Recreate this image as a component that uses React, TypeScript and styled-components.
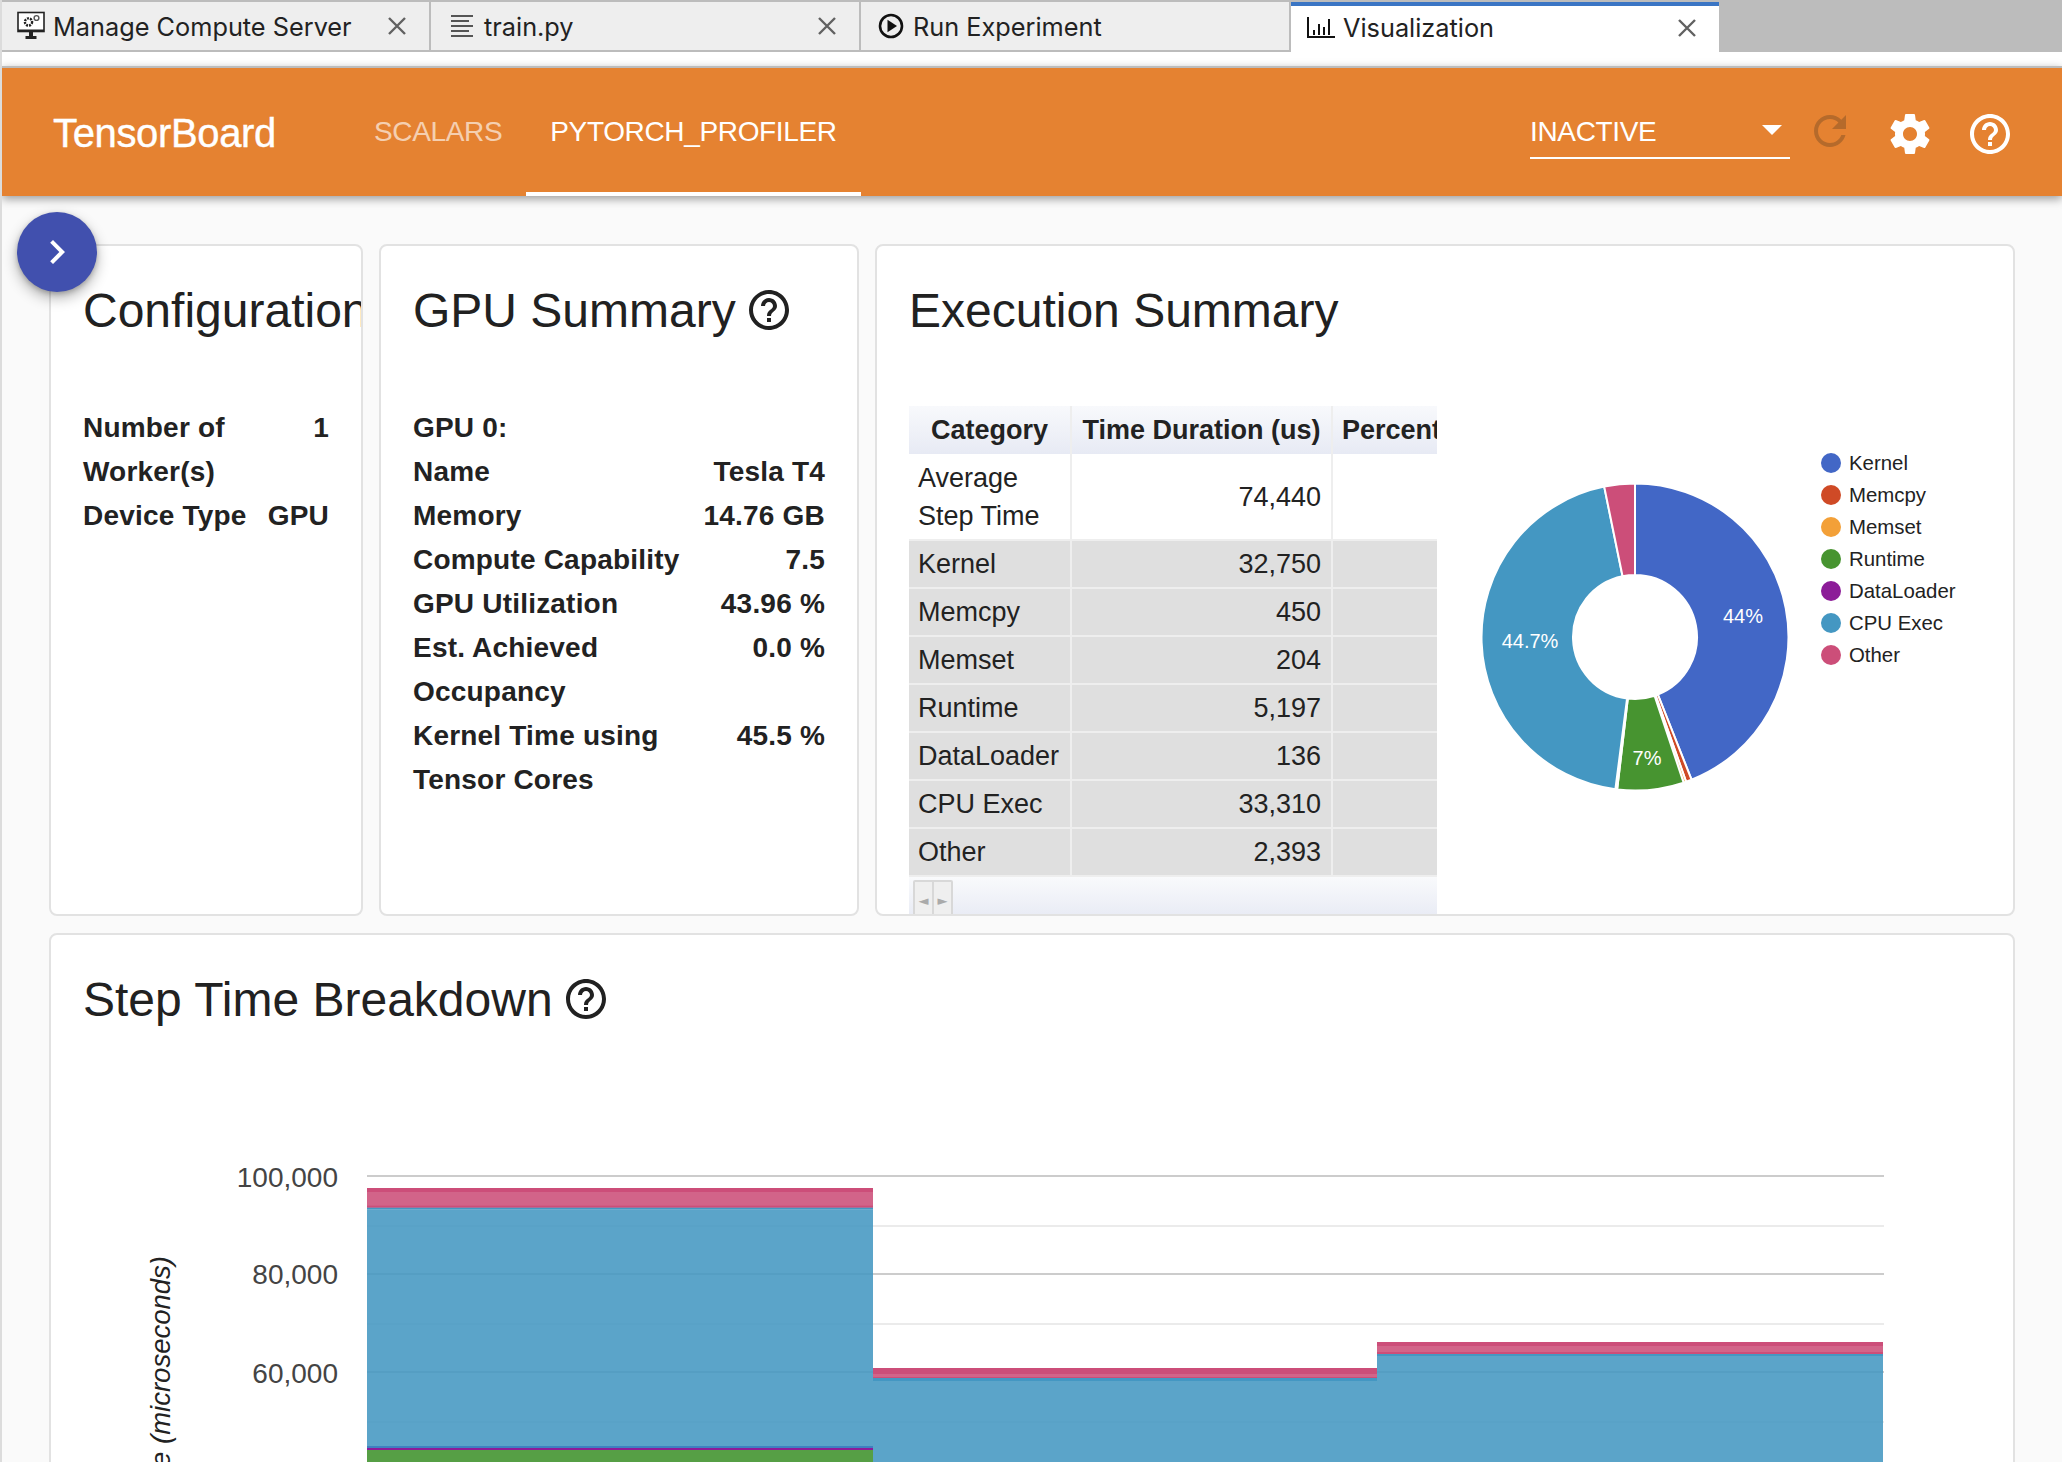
import React from "react";
import styled, { createGlobalStyle } from "styled-components";

const Global = createGlobalStyle`
  html, body { margin: 0; padding: 0; background: #fafafa; }
  * { box-sizing: border-box; }
`;

const Page = styled.div`
  position: relative;
  width: 2062px;
  height: 1462px;
  overflow: hidden;
  display: flex;
  flex-direction: column;
  background: #fafafa;
  border-left: 2px solid #dcdcdc;
  font-family: "Liberation Sans", Arial, sans-serif;
  color: #212121;
`;

/* ---------- editor tabs ---------- */
const TabBar = styled.div`
  display: flex;
  height: 52px;
  margin-left: -2px;
  background: #bcbcbc;
  padding-top: 2px;
`;
const Tab = styled.div<{ $w: number; $active?: boolean }>`
  width: ${(p) => p.$w}px;
  display: flex;
  align-items: center;
  padding-left: ${(p) => (p.$active ? 15 : 16)}px;
  padding-bottom: ${(p) => (p.$active ? 3 : 0)}px;
  background: ${(p) => (p.$active ? "#fff" : "#eeeeee")};
  border-right: ${(p) => (p.$active ? "0" : "2px solid #bcbcbc")};
  border-bottom: ${(p) => (p.$active ? "0" : "2px solid #bcbcbc")};
  border-top: ${(p) => (p.$active ? "4px solid #3a75c4" : "0")};
  font-family: Inter, Roboto, sans-serif;
  font-size: 25.3px;
  color: #222;
`;
const TabIcon = styled.svg`
  flex: none;
  margin-right: 7px;
`;
const TabLabel = styled.span`
  flex: 1;
  white-space: nowrap;
`;
const Close = styled.svg`
  flex: none;
  margin-right: 22px;
`;
const TabGap = styled.div`
  height: 14px;
  background: #fff;
`;

/* ---------- TensorBoard header ---------- */
const Header = styled.header`
  position: relative;
  z-index: 2;
  display: flex;
  align-items: center;
  height: 130px;
  padding-right: 32px;
  background: #e58231;
  border-top: 2px solid #bcbcbc;
  box-shadow: 0 3px 9px rgba(0, 0, 0, 0.38);
  color: #fff;
`;
const Logo = styled.div`
  width: 348px;
  padding-left: 51px;
  padding-top: 2px;
  font-size: 40px;
  letter-spacing: -0.35px;
  -webkit-text-stroke: 0.4px #fff;
  white-space: nowrap;
`;
const NavTab = styled.div<{ $active?: boolean }>`
  align-self: stretch;
  display: flex;
  align-items: center;
  padding: 0 24px 0;
  font-size: 28px;
  letter-spacing: -0.35px;
  opacity: ${(p) => (p.$active ? 1 : 0.62)};
  border-bottom: 4px solid ${(p) => (p.$active ? "#fff" : "transparent")};
  border-top: 4px solid transparent;
  white-space: nowrap;
`;
const Spacer = styled.div`
  flex: 1;
`;
const RunSelect = styled.div`
  width: 260px;
  height: 52px;
  display: flex;
  align-items: center;
  justify-content: space-between;
  padding-right: 8px;
  margin-top: 2px;
  border-bottom: 2px solid #fff;
  font-size: 28px;
  letter-spacing: -0.35px;
`;
const Caret = styled.span`
  width: 0;
  height: 0;
  margin-bottom: 4px;
  border-left: 10px solid transparent;
  border-right: 10px solid transparent;
  border-top: 10px solid #fff;
`;
const IconButton = styled.div<{ $lift?: boolean }>`
  width: 80px;
  height: 80px;
  display: flex;
  align-items: center;
  justify-content: center;
  margin-top: ${(p) => (p.$lift ? -2 : 4)}px;
`;

const Fab = styled.div`
  position: absolute;
  left: 15px;
  top: 212px;
  z-index: 3;
  width: 80px;
  height: 80px;
  border-radius: 50%;
  background: #4150ae;
  display: flex;
  align-items: center;
  justify-content: center;
  box-shadow: 0 6px 14px rgba(0, 0, 0, 0.3), 0 2px 5px rgba(0, 0, 0, 0.2);
`;

/* ---------- page content ---------- */
const Main = styled.main`
  flex: 1;
  min-height: 0;
  display: flex;
  flex-direction: column;
  gap: 17px;
  padding: 48px 47px 0 47px;
`;
const TopRow = styled.div`
  display: grid;
  grid-template-columns: 314px 480px 1fr;
  gap: 16px;
  height: 672px;
  flex: none;
`;
const Card = styled.section`
  min-width: 0;
  overflow: hidden;
  background: #fff;
  border: 2px solid #e2e2e2;
  border-radius: 8px;
  padding: 32px 32px 0;
`;
const WideCard = styled(Card)`
  flex: none;
  height: 700px;
`;
const Title = styled.h2`
  display: flex;
  align-items: center;
  margin: 0;
  height: 64px;
  font-size: 48px;
  font-weight: 400;
  white-space: nowrap;
  color: #212121;
  svg {
    margin-left: -4px;
  }
`;
const Stats = styled.div`
  display: grid;
  grid-template-columns: minmax(0, 1fr) auto;
  margin-top: 64px;
  font-size: 28px;
  font-weight: 700;
  letter-spacing: 0.2px;
  line-height: 44px;
  color: #222;
`;
const StatsSpan = styled.div`
  grid-column: 1 / -1;
`;
const StatValue = styled.div`
  text-align: right;
  white-space: nowrap;
`;
const ConfigStats = styled(Stats)`
  column-gap: 16px;
`;

/* ---------- execution summary ---------- */
const ExecBody = styled.div`
  display: flex;
  margin-top: 64px;
  margin-right: -32px;
  height: 513px;
`;
const TableClip = styled.div`
  flex: none;
  width: 528px;
  overflow: hidden;
  display: flex;
  flex-direction: column;
`;
const DataTable = styled.table`
  table-layout: fixed;
  width: 620px;
  border-collapse: collapse;
  font-size: 27px;
  color: #222;
`;
const Th = styled.th<{ $w: number; $pad?: boolean }>`
  width: ${(p) => p.$w}px;
  height: 48px;
  padding: 0 0 0 ${(p) => (p.$pad ? 9 : 0)}px;
  text-align: center;
  white-space: nowrap;
  overflow: hidden;
  font-weight: 700;
  font-size: 27px;
  background: linear-gradient(#f8f9fc, #e7eaf4);
  border-right: 2px solid #eee;
`;
const Tr = styled.tr<{ $shade?: boolean }>`
  background: ${(p) => (p.$shade ? "#dfdfdf" : "#fff")};
`;
const Td = styled.td<{ $num?: boolean; $tall?: boolean }>`
  height: ${(p) => (p.$tall ? 86 : 48)}px;
  padding: 0 ${(p) => (p.$num ? 10 : 0)}px 0 ${(p) => (p.$num ? 0 : 9)}px;
  text-align: ${(p) => (p.$num ? "right" : "left")};
  line-height: 38px;
  border: 2px solid #eee;
  border-left: 0;
  border-top: 0;
`;
const Pager = styled.div`
  flex: 1;
  padding: 3px 0 0 4px;
  background: linear-gradient(#f9fafc, #e7eaf4);
`;
const PagerButtons = styled.div`
  width: 40px;
  height: 40px;
  display: flex;
  border: 2px solid #d8d8d8;
  border-radius: 2px;
  background: #e8e8e8;
`;
const PagerBtn = styled.div`
  flex: 1;
  display: flex;
  align-items: center;
  justify-content: center;
  font-family: "DejaVu Sans", sans-serif;
  font-size: 13px;
  color: #aaa;
  background: #efefef;
  & + & {
    border-left: 2px solid #d8d8d8;
  }
`;
const ChartSvg = styled.svg`
  display: block;
  flex: none;
`;
const StepSvg = styled(ChartSvg)`
  margin-left: -32px;
`;

const tabIconStroke = "#222";

const MonitorIcon = () => (
  <TabIcon width="30" height="30" viewBox="0 0 30 30">
    <rect x="2" y="1.5" width="26" height="19" fill="#fff" stroke={tabIconStroke} strokeWidth="1.6" />
    <rect x="2" y="18.5" width="26" height="2.5" fill={tabIconStroke} />
    <rect x="13" y="21" width="4" height="4" fill={tabIconStroke} />
    <rect x="9.5" y="25" width="11" height="3" fill={tabIconStroke} />
    <circle cx="12.5" cy="11" r="3.6" fill="none" stroke={tabIconStroke} strokeWidth="2.4" strokeDasharray="2 1" />
    <circle cx="20.5" cy="7" r="2.4" fill="none" stroke="#555" strokeWidth="1.4" />
  </TabIcon>
);
const LinesIcon = () => (
  <TabIcon width="28" height="26" viewBox="0 0 28 26" style={{ marginLeft: 2, marginRight: 7 }}>
    {[3, 8, 13, 18, 23].map((y, i) => (
      <rect key={y} x="2" y={y - 1} width={i % 2 ? 18 : 22} height="2" fill="#555" />
    ))}
  </TabIcon>
);
const PlayIcon = () => (
  <TabIcon width="28" height="28" viewBox="0 0 28 28" style={{ marginRight: 8 }}>
    <circle cx="14" cy="14" r="11" fill="none" stroke="#111" strokeWidth="2.6" />
    <path d="M10.5 7.8 20 14l-9.5 6.2z" fill="#111" />
  </TabIcon>
);
const BarsIcon = () => (
  <TabIcon width="30" height="26" viewBox="0 0 30 26">
    <path d="M2 2v20h27" fill="none" stroke="#111" strokeWidth="2" />
    <path d="M8 20v-5M13 20V9M18 20v-8M23 20V4" fill="none" stroke="#111" strokeWidth="2" />
  </TabIcon>
);
const CloseIcon = () => (
  <Close width="20" height="20" viewBox="0 0 20 20">
    <path d="M2 2l16 16M18 2 2 18" stroke="#616161" strokeWidth="2.4" fill="none" />
  </Close>
);

const helpPath =
  "M11 18h2v-2h-2v2zm1-16C6.48 2 2 6.48 2 12s4.48 10 10 10 10-4.48 10-10S17.52 2 12 2zm0 18c-4.41 0-8-3.59-8-8s3.59-8 8-8 8 3.59 8 8-3.59 8-8 8zm0-14c-2.21 0-4 1.79-4 4h2c0-1.1.9-2 2-2s2 .9 2 2c0 2-3 1.75-3 5h2c0-2.25 3-2.5 3-5 0-2.21-1.79-4-4-4z";
const gearPath =
  "M19.43 12.98c.04-.32.07-.64.07-.98s-.03-.66-.07-.98l2.11-1.65c.19-.15.24-.42.12-.64l-2-3.46c-.12-.22-.39-.3-.61-.22l-2.49 1c-.52-.4-1.08-.73-1.69-.98l-.38-2.65C14.46 2.18 14.25 2 14 2h-4c-.25 0-.46.18-.49.42l-.38 2.65c-.61.25-1.17.59-1.69.98l-2.49-1c-.23-.09-.49 0-.61.22l-2 3.46c-.13.22-.07.49.12.64l2.11 1.65c-.04.32-.07.65-.07.98s.03.66.07.98l-2.11 1.65c-.19.15-.24.42-.12.64l2 3.46c.12.22.39.3.61.22l2.49-1c.52.4 1.08.73 1.69.98l.38 2.65c.03.24.24.42.49.42h4c.25 0 .46-.18.49-.42l.38-2.65c.61-.25 1.17-.59 1.69-.98l2.49 1c.23.09.49 0 .61-.22l2-3.46c.12-.22.07-.49-.12-.64l-2.11-1.65zM12 15.5c-1.93 0-3.5-1.57-3.5-3.5s1.57-3.5 3.5-3.5 3.5 1.57 3.5 3.5-1.57 3.5-3.5 3.5z";
const refreshPath =
  "M17.65 6.35C16.2 4.9 14.21 4 12 4c-4.42 0-7.99 3.58-7.99 8s3.57 8 7.99 8c3.73 0 6.84-2.55 7.73-6h-2.08c-.82 2.33-3.04 4-5.65 4-3.31 0-6-2.69-6-6s2.69-6 6-6c1.66 0 3.14.69 4.22 1.78L13 11h7V4l-2.35 2.35z";

const Material = ({ d, color, size = 48 }: { d: string; color: string; size?: number }) => (
  <svg width={size} height={size} viewBox="0 0 24 24" style={{ flex: "none" }}>
    <path d={d} fill={color} />
  </svg>
);

const Help = () => <Material d={helpPath} color="#212121" />;

/* ---------- data ---------- */
const rows: [string, string][] = [
  ["Kernel", "32,750"],
  ["Memcpy", "450"],
  ["Memset", "204"],
  ["Runtime", "5,197"],
  ["DataLoader", "136"],
  ["CPU Exec", "33,310"],
  ["Other", "2,393"],
];
const sliceColors = ["#4267c6", "#cf4a26", "#f3a038", "#479430", "#8c1c98", "#4497c2", "#cc4e79"];
const sliceValues = [32750, 450, 204, 5197, 136, 33310, 2393];

const arcPath = (cx: number, cy: number, R: number, r: number, a0: number, a1: number) => {
  const p = (rad: number, a: number) =>
    `${(cx + rad * Math.sin(a)).toFixed(2)} ${(cy - rad * Math.cos(a)).toFixed(2)}`;
  const large = a1 - a0 > Math.PI ? 1 : 0;
  return `M${p(R, a0)}A${R} ${R} 0 ${large} 1 ${p(R, a1)}L${p(r, a1)}A${r} ${r} 0 ${large} 0 ${p(r, a0)}Z`;
};

const Donut = () => {
  const total = sliceValues.reduce((a, b) => a + b, 0);
  let acc = 0;
  return (
    <ChartSvg width="575" height="513" viewBox="1437 405 575 513">
      {sliceValues.map((v, i) => {
        const a0 = (acc / total) * Math.PI * 2;
        acc += v;
        const a1 = (acc / total) * Math.PI * 2;
        return (
          <path key={i} d={arcPath(1635, 636, 153.5, 62, a0, a1)} fill={sliceColors[i]} stroke="#fff" strokeWidth="2" />
        );
      })}
      <g fontSize="20" fill="#fff" textAnchor="middle">
        <text x="1743" y="622">44%</text>
        <text x="1530" y="647">44.7%</text>
        <text x="1647" y="764">7%</text>
      </g>
      <g fontSize="20.4" fill="#222">
        {rows.map(([name], i) => (
          <g key={name}>
            <circle cx="1831" cy={462 + i * 32} r="10" fill={sliceColors[i]} />
            <text x="1849" y={469 + i * 32}>{name}</text>
          </g>
        ))}
      </g>
    </ChartSvg>
  );
};

const bars = [
  { x: 367, w: 506, top: 1187, a: 1191, b: 1204.7, c: 1206.7, d: 1208.7 },
  { x: 873, w: 504, top: 1367, a: 1373, b: 1376, c: 1377, d: 1380 },
  { x: 1377, w: 506, top: 1341, a: 1345, b: 1351, c: 1353, d: 1355 },
];

const StepChart = () => {
  const major = [1175, 1273, 1371];
  const minor = [1225, 1323, 1421];
  const labels: [string, number][] = [
    ["100,000", 1186],
    ["80,000", 1283],
    ["60,000", 1382],
    ["40,000", 1480],
  ];
  return (
    <StepSvg width="1964" height="432" viewBox="51 1030 1964 432">
      {minor.map((y) => (
        <rect key={y} x="367" y={y - 1} width="1517" height="2" fill="#ebebeb" />
      ))}
      {major.map((y) => (
        <rect key={y} x="367" y={y - 1} width="1517" height="2" fill="#cccccc" />
      ))}
      <g fontSize="28" fill="#444" textAnchor="end">
        {labels.map(([t, y]) => (
          <text key={t} x="338" y={y}>{t}</text>
        ))}
      </g>
      <text
        transform="translate(170 1255) rotate(-90)"
        fontSize="27.5"
        fontStyle="italic"
        fill="#222"
        textAnchor="end"
      >
        Step Time (microseconds)
      </text>
      {bars.map((b) => (
        <g key={b.x}>
          <rect x={b.x} y={b.top} width={b.w} height={b.c - b.top} fill="#cc4e79" fillOpacity="0.88" />
          <rect x={b.x} y={b.top} width={b.w} height={b.a - b.top} fill="#cc4e79" />
          <rect x={b.x} y={b.b} width={b.w} height={b.c - b.b} fill="#cc4e79" />
          <rect x={b.x} y={b.c} width={b.w} height={b.d - b.c} fill="#4497c2" />
          <rect x={b.x} y={b.d} width={b.w} height={1462 - b.d} fill="#4497c2" fillOpacity="0.88" />
        </g>
      ))}
      <rect x="367" y="1445" width="506" height="2" fill="#3f80c0" />
      <rect x="367" y="1447" width="506" height="2" fill="#8c1c98" />
      <rect x="367" y="1449" width="506" height="13" fill="#569f45" />
    </StepSvg>
  );
};

export default function App() {
  return (
    <>
      <Global />
      <Page>
        <TabBar>
          <Tab $w={431}>
            <MonitorIcon />
            <TabLabel>Manage Compute Server</TabLabel>
            <CloseIcon />
          </Tab>
          <Tab $w={430}>
            <LinesIcon />
            <TabLabel>train.py</TabLabel>
            <CloseIcon />
          </Tab>
          <Tab $w={430}>
            <PlayIcon />
            <TabLabel>Run Experiment</TabLabel>
          </Tab>
          <Tab $w={428} $active>
            <BarsIcon />
            <TabLabel>Visualization</TabLabel>
            <CloseIcon />
          </Tab>
        </TabBar>
        <TabGap />
        <Header>
          <Logo>TensorBoard</Logo>
          <NavTab>SCALARS</NavTab>
          <NavTab $active>PYTORCH_PROFILER</NavTab>
          <Spacer />
          <RunSelect>
            <span>INACTIVE</span>
            <Caret />
          </RunSelect>
          <IconButton $lift>
            <Material d={refreshPath} color="#b56a2b" />
          </IconButton>
          <IconButton>
            <Material d={gearPath} color="#fff" />
          </IconButton>
          <IconButton>
            <Material d={helpPath} color="#fff" />
          </IconButton>
        </Header>
        <Fab>
          <Material d="M10 6 8.59 7.41 13.17 12l-4.58 4.58L10 18l6-6z" color="#fff" />
        </Fab>
        <Main>
          <TopRow>
            <Card>
              <Title>Configuration</Title>
              <ConfigStats>
                <div>Number of Worker(s)</div>
                <StatValue>1</StatValue>
                <div>Device Type</div>
                <StatValue>GPU</StatValue>
              </ConfigStats>
            </Card>
            <Card>
              <Title>
                GPU Summary&nbsp;
                <Help />
              </Title>
              <Stats>
                <StatsSpan>GPU 0:</StatsSpan>
                <div>Name</div>
                <StatValue>Tesla T4</StatValue>
                <div>Memory</div>
                <StatValue>14.76 GB</StatValue>
                <div>Compute Capability</div>
                <StatValue>7.5</StatValue>
                <div>GPU Utilization</div>
                <StatValue>43.96 %</StatValue>
                <div>Est. Achieved Occupancy</div>
                <StatValue>0.0 %</StatValue>
                <div>Kernel Time using Tensor Cores</div>
                <StatValue>45.5 %</StatValue>
              </Stats>
            </Card>
            <Card>
              <Title>Execution Summary</Title>
              <ExecBody>
                <TableClip>
                  <DataTable>
                    <thead>
                      <tr>
                        <Th $w={162}>Category</Th>
                        <Th $w={261}>Time Duration (us)</Th>
                        <Th $w={197} $pad>Percentage (%)</Th>
                      </tr>
                    </thead>
                    <tbody>
                      <Tr>
                        <Td $tall>Average Step Time</Td>
                        <Td $tall $num>74,440</Td>
                        <Td $tall />
                      </Tr>
                      {rows.map(([name, value]) => (
                        <Tr key={name} $shade>
                          <Td>{name}</Td>
                          <Td $num>{value}</Td>
                          <Td />
                        </Tr>
                      ))}
                    </tbody>
                  </DataTable>
                  <Pager>
                    <PagerButtons>
                      <PagerBtn>◄</PagerBtn>
                      <PagerBtn>►</PagerBtn>
                    </PagerButtons>
                  </Pager>
                </TableClip>
                <Donut />
              </ExecBody>
            </Card>
          </TopRow>
          <WideCard>
            <Title>
              Step Time Breakdown&nbsp;
              <Help />
            </Title>
            <StepChart />
          </WideCard>
        </Main>
      </Page>
    </>
  );
}
